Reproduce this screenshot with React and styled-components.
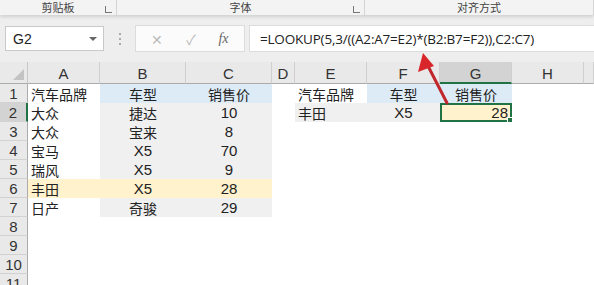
import React from 'react'
import styled, { createGlobalStyle } from 'styled-components'

const Global = createGlobalStyle`
  html, body { margin: 0; padding: 0; background: #fff; }
  body { font-family: 'Noto Sans CJK SC', 'Liberation Sans', sans-serif; }
`

const Page = styled.div`
  position: relative;
  width: 594px;
  height: 285px;
  overflow: hidden;
  background: #fff;
`

const Ribbon = styled.div`
  display: flex;
  height: 15px;
  background: #f3f3f3;
  box-shadow: 0 2px 3px rgba(0, 0, 0, 0.12);
  position: relative;
  z-index: 1;
`

const Group = styled.div`
  width: ${(p) => p.w}px;
  position: relative;
  display: flex;
  justify-content: center;
  align-items: center;
  font-size: 11px;
  line-height: 13px;
  color: #444;
  border-right: 1px solid #d4d4d4;
`

const GroupLabel = styled.span`
  padding-left: ${(p) => p.pl || 0}px;
`

const Launcher = styled.span`
  position: absolute;
  right: 4px;
  bottom: 2px;
  width: 6px;
  height: 6px;
  border-left: 1px solid #777;
  border-bottom: 1px solid #777;
`

const FormulaBar = styled.div`
  display: flex;
  align-items: center;
  height: 47px;
  padding-left: 5px;
  background: #eeeeee;
`

const NameBox = styled.div`
  width: 99px;
  height: 25px;
  background: #fff;
  border: 1px solid #c9c9c9;
  display: flex;
  align-items: center;
  justify-content: space-between;
  padding: 0 6px 0 7px;
  box-sizing: border-box;
  font-family: 'Liberation Sans', sans-serif;
  font-size: 14px;
  color: #222;
`

const Caret = styled.span`
  width: 0;
  height: 0;
  border-left: 4px solid transparent;
  border-right: 4px solid transparent;
  border-top: 4px solid #666;
`

const Dots = styled.div`
  width: 31px;
  display: flex;
  flex-direction: column;
  align-items: center;
  gap: 3px;
  span {
    width: 2px;
    height: 2px;
    background: #aaa;
  }
`

const FxBox = styled.div`
  width: 110px;
  height: 27px;
  background: #fbfbfb;
  border: 1px solid #dcdcdc;
  box-sizing: border-box;
  display: flex;
  align-items: center;
  justify-content: space-around;
  padding: 0 4px;
  color: #bbb;
  font-size: 14px;
`

const Fx = styled.span`
  font-family: 'Liberation Serif', serif;
  font-style: italic;
  font-size: 14px;
  color: #666;
`

const FormulaInput = styled.div`
  flex: 1;
  height: 27px;
  margin-left: 4px;
  background: #fff;
  border: 1px solid #dcdcdc;
  border-right: none;
  box-sizing: border-box;
  display: flex;
  align-items: center;
  padding-left: 10px;
  font-family: 'Open Sans', 'Liberation Sans', sans-serif;
  font-size: 13.5px;
  letter-spacing: -0.2px;
  color: #222;
  white-space: nowrap;
`

const Sheet = styled.div`
  display: grid;
  grid-template-columns: 28px 72px 86px 86px 23px 72px 73px 72px 72px 10px;
  grid-auto-rows: 19px;
  grid-template-rows: 22px;
  background: #fff;
`

const Corner = styled.div`
  background: #e9e9e9;
  border-right: 1px solid #c8c8c8;
  border-bottom: 1px solid #ababab;
  position: relative;
  &::after {
    content: '';
    position: absolute;
    right: 3px;
    bottom: 3px;
    border-left: 11px solid transparent;
    border-bottom: 11px solid #c3c3c3;
  }
`

const ColHead = styled.div`
  background: ${(p) => (p.active ? '#d3d3d3' : '#e9e9e9')};
  border-right: 1px solid #cfcfcf;
  border-bottom: ${(p) => (p.active ? '2px solid #217346' : '1px solid #ababab')};
  display: flex;
  align-items: center;
  justify-content: center;
  font-family: 'Liberation Sans', sans-serif;
  font-size: 15px;
  color: #333;
  box-sizing: border-box;
  padding-top: 2px;
`

const RowHead = styled.div`
  background: ${(p) => (p.active ? '#d3d3d3' : '#e9e9e9')};
  border-right: ${(p) => (p.active ? '2px solid #217346' : '1px solid #ababab')};
  border-bottom: 1px solid #d2d2d2;
  display: flex;
  align-items: center;
  justify-content: center;
  font-family: 'Liberation Sans', sans-serif;
  font-size: 15px;
  color: #333;
  box-sizing: border-box;
`

const Cell = styled.div`
  background: ${(p) => p.bg || '#fff'};
  display: flex;
  align-items: center;
  justify-content: ${(p) => (p.align === 'right' ? 'flex-end' : p.align === 'left' ? 'flex-start' : 'center')};
  padding: 0 3px;
  font-size: ${(p) => (p.num ? 15 : 14)}px;
  font-family: ${(p) =>
    p.num ? "'Liberation Sans', sans-serif" : "'Noto Sans CJK SC', 'Liberation Sans', sans-serif"};
  color: #222;
  white-space: nowrap;
  position: relative;
  box-sizing: border-box;
  ${(p) =>
    p.selected &&
    `
    border: 2px solid #217346;
    padding-right: 2px;
    &::after {
      content: '';
      position: absolute;
      right: -4px;
      bottom: -4px;
      width: 5px;
      height: 5px;
      background: #217346;
      border: 1px solid #fff;
    }
  `}
`

const Arrow = styled.svg`
  position: absolute;
  left: 0;
  top: 0;
  pointer-events: none;
`

const BLUE = '#ddebf7'
const GRAY = '#f0f0f0'
const YEL = '#fff2cc'

const left = [
  ['汽车品牌', '车型', '销售价'],
  ['大众', '捷达', '10'],
  ['大众', '宝来', '8'],
  ['宝马', 'X5', '70'],
  ['瑞风', 'X5', '9'],
  ['丰田', 'X5', '28'],
  ['日产', '奇骏', '29'],
]

const cols = ['A', 'B', 'C', 'D', 'E', 'F', 'G', 'H', '']

function rowCells(r) {
  const cells = []
  const d = left[r - 1]
  if (d) {
    const isYel = r === 6
    cells.push(
      <Cell key="a" align="left" bg={isYel ? YEL : '#fff'}>{d[0]}</Cell>,
      <Cell key="b" num={r > 1 && /\d/.test(d[1])} bg={r === 1 ? BLUE : isYel ? YEL : GRAY}>{d[1]}</Cell>,
      <Cell key="c" num={r > 1} bg={r === 1 ? BLUE : isYel ? YEL : GRAY}>{d[2]}</Cell>
    )
  } else {
    cells.push(<Cell key="a" />, <Cell key="b" />, <Cell key="c" />)
  }
  cells.push(<Cell key="d" />)
  if (r === 1) {
    cells.push(
      <Cell key="e" align="left">汽车品牌</Cell>,
      <Cell key="f" bg={BLUE}>车型</Cell>,
      <Cell key="g" bg={BLUE}>销售价</Cell>
    )
  } else if (r === 2) {
    cells.push(
      <Cell key="e" align="left" bg={GRAY}>丰田</Cell>,
      <Cell key="f" num bg={GRAY}>X5</Cell>,
      <Cell key="g" num align="right" bg={YEL} selected>28</Cell>
    )
  } else {
    cells.push(<Cell key="e" />, <Cell key="f" />, <Cell key="g" />)
  }
  cells.push(<Cell key="h" />, <Cell key="i" />)
  return cells
}

export default function App() {
  const rows = Array.from({ length: 11 }, (_, i) => i + 1)
  return (
    <Page>
      <Global />
      <Ribbon>
        <Group w={127}>
          <GroupLabel pl={-18}>剪贴板</GroupLabel>
          <Launcher />
        </Group>
        <Group w={271}>
          <GroupLabel>字体</GroupLabel>
          <Launcher />
        </Group>
        <Group w={250}>
          <GroupLabel>对齐方式</GroupLabel>
        </Group>
      </Ribbon>
      <FormulaBar>
        <NameBox>
          G2
          <Caret />
        </NameBox>
        <Dots>
          <span />
          <span />
          <span />
        </Dots>
        <FxBox>
          <span>✕</span>
          <span>✓</span>
          <Fx>fx</Fx>
        </FxBox>
        <FormulaInput>=LOOKUP(5,3/((A2:A7=E2)*(B2:B7=F2)),C2:C7)</FormulaInput>
      </FormulaBar>
      <Sheet>
        <Corner />
        {cols.map((c) => (
          <ColHead key={c || 'x'} active={c === 'G'}>{c}</ColHead>
        ))}
        {rows.map((r) => (
          <React.Fragment key={r}>
            <RowHead active={r === 2}>{r}</RowHead>
            {rowCells(r)}
          </React.Fragment>
        ))}
      </Sheet>
      <Arrow width="594" height="285" viewBox="0 0 594 285">
        <line x1="447" y1="103" x2="428" y2="66" stroke="#c0282d" strokeWidth="3" strokeLinecap="round" />
        <polygon points="423,53 418,72 434,66" fill="#d8262b" />
      </Arrow>
    </Page>
  )
}
